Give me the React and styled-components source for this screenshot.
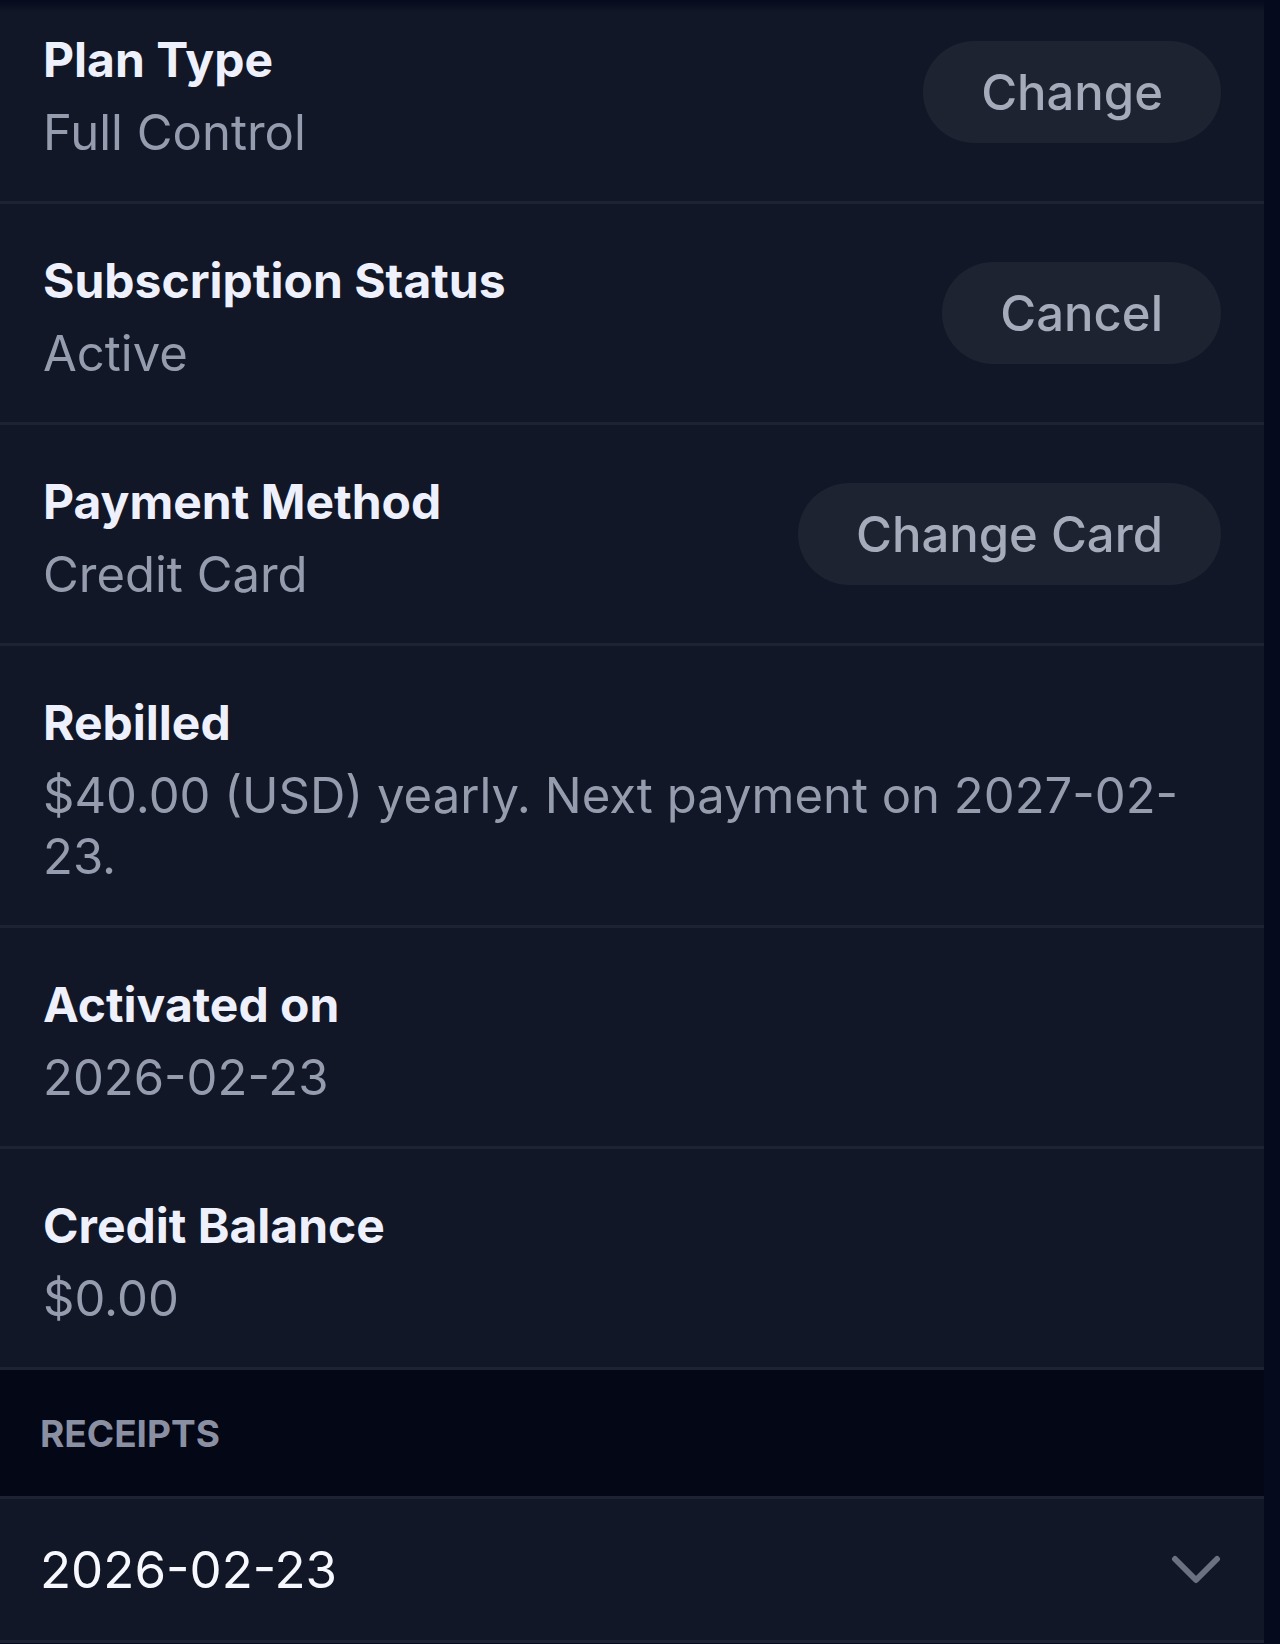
import React from "react";
import styled, { createGlobalStyle } from "styled-components";

const GlobalStyle = createGlobalStyle`
  html, body {
    margin: 0;
    padding: 0;
    background: #050a1c;
  }
  body {
    font-family: Inter, "Noto Sans", sans-serif;
  }
`;

const Page = styled.div`
  width: 1280px;
  min-height: 1644px;
  background: #050a1c;
`;

const TopShade = styled.div`
  height: 12px;
  background: linear-gradient(#050a1c, #111727);
  width: 1264px;
`;

const Panel = styled.div`
  width: 1264px;
  background: #111727;
`;

const Row = styled.div`
  display: flex;
  align-items: center;
  justify-content: space-between;
  gap: 40px;
  padding: ${(p) => (p.first ? "9px" : "38px")} 43px 38px;
  border-bottom: 3px solid #1d2332;
`;

const Info = styled.div`
  display: flex;
  flex-direction: column;
  gap: 12px;
  min-width: 0;
  padding-top: 8px;
`;

const Label = styled.div`
  font-size: 48px;
  line-height: 61px;
  font-weight: 700;
  color: #eef1fc;
`;

const Value = styled.div`
  font-size: 49px;
  line-height: 61px;
  font-weight: 400;
  color: #959cad;
`;

const PillButton = styled.button`
  flex-shrink: 0;
  height: 102px;
  padding: 0 58px;
  border: none;
  border-radius: 51px;
  background: #1e2331;
  color: #a5abba;
  font-family: inherit;
  font-size: 49px;
  font-weight: 500;
  cursor: pointer;
`;

const SectionHeader = styled.div`
  display: flex;
  align-items: center;
  height: 126px;
  padding: 0 40px;
  background: #030716;
  border-bottom: 3px solid #1d2332;
  color: #8a90a2;
  font-size: 37px;
  font-weight: 700;
  text-transform: uppercase;
`;

const ReceiptRow = styled.div`
  display: flex;
  align-items: center;
  justify-content: space-between;
  height: 141px;
  padding: 0 43px 0 40px;
  border-bottom: 3px solid #1d2332;
  color: #f7f8fd;
  font-size: 51px;
  font-weight: 400;
`;

const Chevron = () => (
  <svg width="50" height="30" viewBox="0 0 50 30" fill="none">
    <path
      d="M4 4 L25 25 L46 4"
      stroke="#6b7181"
      strokeWidth="6"
      strokeLinecap="round"
      strokeLinejoin="round"
    />
  </svg>
);

const rows = [
  { label: "Plan Type", value: "Full Control", action: "Change" },
  { label: "Subscription Status", value: "Active", action: "Cancel" },
  { label: "Payment Method", value: "Credit Card", action: "Change Card" },
  {
    label: "Rebilled",
    value: (
      <>
        $40.00 (USD) yearly. Next payment on 2027-02-
        <wbr />
        23.
      </>
    ),
  },
  { label: "Activated on", value: "2026-02-23" },
  { label: "Credit Balance", value: "$0.00" },
];

const App = () => {
  return (
    <Page>
      <GlobalStyle />
      <TopShade />
      <Panel>
        {rows.map((r, i) => (
          <Row key={r.label} first={i === 0}>
            <Info>
              <Label>{r.label}</Label>
              <Value>{r.value}</Value>
            </Info>
            {r.action && <PillButton>{r.action}</PillButton>}
          </Row>
        ))}
        <SectionHeader>Receipts</SectionHeader>
        <ReceiptRow>
          <span>2026-02-23</span>
          <Chevron />
        </ReceiptRow>
      </Panel>
    </Page>
  );
};

export default App;
